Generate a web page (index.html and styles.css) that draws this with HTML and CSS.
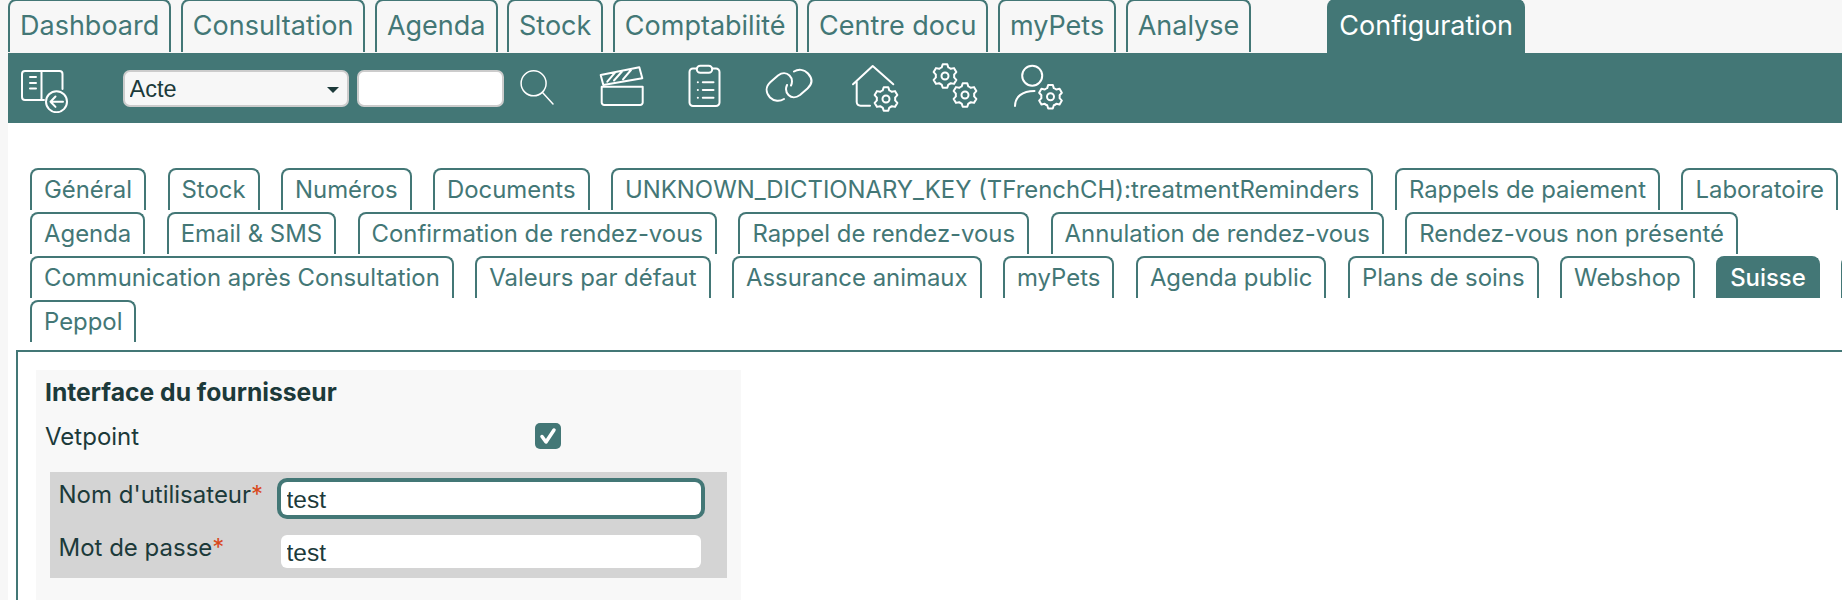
FILE: index.html
```html
<!DOCTYPE html>
<html lang="fr">
<head>
<meta charset="UTF-8">
<title>Configuration</title>
<link rel="stylesheet" href="styles.css">
</head>
<body>

<nav class="main-tabs">
    <a class="main-tab">Dashboard</a>
    <a class="main-tab">Consultation</a>
    <a class="main-tab">Agenda</a>
    <a class="main-tab">Stock</a>
    <a class="main-tab">Comptabilité</a>
    <a class="main-tab">Centre docu</a>
    <a class="main-tab">myPets</a>
    <a class="main-tab">Analyse</a>
    <a class="main-tab active">Configuration</a>
</nav>

<div class="toolbar">
    <svg class="icon" viewBox="0 0 50 50">
        <path d="M42.500 26V11a3 3 0 0 0-3-3H5a3 3 0 0 0-3 3v23a3 3 0 0 0 3 3h19M21.500 8v29M10 14h6M10 20h6M10 25.500h6"/>
        <circle cx="36.500" cy="38.700" r="10.500"/>
        <path d="M43 38.700H30.500M35.500 33.500l-5 5.200 5 5.200"/>
    </svg>
    <div class="select-wrap">
        <select class="search-type"><option>Acte</option></select>
    </div>
    <input class="search-box" type="text">
    <svg class="icon search-icon" viewBox="0 0 50 50">
        <circle cx="21.600" cy="20.300" r="12.500"/>
        <path d="M30.500 29.500L41 41"/>
    </svg>
    <svg class="icon clapper-icon" viewBox="0 0 50 50">
        <path d="M4.700 23.700H45.700V39.500a2.500 2.500 0 0 1-2.500 2.500H7.200a2.500 2.500 0 0 1-2.500-2.500Z"/>
        <path d="M3.700 12L42.300 4.300L45.300 15.300L6.300 22ZM10.300 18.700L18 9.700M17 17.500L25 8.500M26 16.300L34 7"/>
    </svg>
    <svg class="icon clipboard-icon" viewBox="0 0 50 50">
        <path d="M16.800 5.500H13a3.500 3.500 0 0 0-3.500 3.500V39.500a3.500 3.500 0 0 0 3.500 3.500H36a3.500 3.500 0 0 0 3.500-3.500V9a3.500 3.500 0 0 0-3.500-3.500H32.200"/>
        <rect x="16.800" y="2.700" width="15.400" height="7" rx="3.500"/>
        <path d="M17.800 19.300h.1M17.800 27h.1M17.800 34.700h.1M22.800 19.300H33.500M22.800 27H33.500M22.800 34.700H33.500"/>
    </svg>
    <svg class="icon link-icon" viewBox="0 0 50 50">
        <path d="M20 36C16 38.500 10 38.500 6 34.500C1.500 29.500 1.500 23.500 6.500 19L14 12.500C18 9.500 22.500 9.500 25.500 12.500C28 15 28.500 19 27 22.500"/>
        <path d="M30 8.500C34 6 40 6 44 10.500C48.500 15.500 48.500 21 43.500 25.500L36 32C32 35 27.500 35 24.500 32C22 29.500 21.500 25.500 23 22"/>
    </svg>
    <svg class="icon house-icon" viewBox="0 0 50 50">
        <defs>
            <g id="gear">
                <path d="M-3.300-8.590L-2.290-11.780H2.290L3.300-8.590A9.200 9.200 0 0 1 5.790-7.150L9.060-7.870L11.350-3.910L9.090-1.440A9.200 9.200 0 0 1 9.090 1.440L11.350 3.910L9.060 7.870L5.790 7.150A9.200 9.200 0 0 1 3.300 8.590L2.290 11.780H-2.290L-3.300 8.590A9.200 9.200 0 0 1-5.790 7.150L-9.060 7.870L-11.350 3.910L-9.090 1.440A9.200 9.200 0 0 1-9.090-1.440L-11.350-3.910L-9.060-7.870L-5.790-7.150A9.200 9.200 0 0 1-3.300-8.590Z"/>
                <circle r="3.500"/>
            </g>
        </defs>
        <path d="M2 21.300L21.700 3L42.300 21.300M5.700 19V39a4 4 0 0 0 4 3.700H19"/>
        <use href="#gear" x="35" y="36"/>
    </svg>
    <svg class="icon gears-icon" viewBox="0 0 50 50">
        <use href="#gear" x="15" y="13"/>
        <use href="#gear" x="35" y="32"/>
    </svg>
    <svg class="icon user-icon" viewBox="0 0 50 50">
        <circle cx="18.200" cy="12.700" r="10"/>
        <path d="M1 43C1 34 8 28 20.500 28"/>
        <use href="#gear" x="36.500" y="33.700"/>
    </svg>
</div>

<main class="content">
    <div class="sub-tabs">
        <div class="sub-row">
            <a class="sub-tab">Général</a>
            <a class="sub-tab">Stock</a>
            <a class="sub-tab">Numéros</a>
            <a class="sub-tab">Documents</a>
            <a class="sub-tab">UNKNOWN_DICTIONARY_KEY (TFrenchCH):treatmentReminders</a>
            <a class="sub-tab">Rappels de paiement</a>
            <a class="sub-tab">Laboratoire</a>
        </div>
        <div class="sub-row">
            <a class="sub-tab">Agenda</a>
            <a class="sub-tab">Email &amp; SMS</a>
            <a class="sub-tab">Confirmation de rendez-vous</a>
            <a class="sub-tab">Rappel de rendez-vous</a>
            <a class="sub-tab">Annulation de rendez-vous</a>
            <a class="sub-tab">Rendez-vous non présenté</a>
        </div>
        <div class="sub-row">
            <a class="sub-tab">Communication après Consultation</a>
            <a class="sub-tab">Valeurs par défaut</a>
            <a class="sub-tab">Assurance animaux</a>
            <a class="sub-tab">myPets</a>
            <a class="sub-tab">Agenda public</a>
            <a class="sub-tab">Plans de soins</a>
            <a class="sub-tab">Webshop</a>
            <a class="sub-tab active">Suisse</a>
            <a class="sub-tab"></a>
        </div>
        <div class="sub-row">
            <a class="sub-tab">Peppol</a>
        </div>
    </div>

    <section class="panel">
        <div class="settings">
            <h2 class="settings-title">Interface du fournisseur</h2>
            <div class="check-row">
                <span class="check-label">Vetpoint</span>
                <span class="checkbox">
                    <svg viewBox="0 0 26 26"><path d="M7 13.500L11 19L19 7"/></svg>
                </span>
            </div>
            <div class="credentials">
                <div class="field">
                    <label class="field-label">Nom d'utilisateur<span class="required">*</span></label>
                    <input class="field-input focused" type="text" value="test">
                </div>
                <div class="field">
                    <label class="field-label">Mot de passe<span class="required">*</span></label>
                    <input class="field-input" type="text" value="test">
                </div>
            </div>
        </div>
    </section>
</main>

</body>
</html>
```

FILE: styles.css
```css
* {
    box-sizing: border-box;
}

html, body {
    height: 600px;
    overflow: hidden;
}

body {
    margin: 0;
    background-color: #f7f7f7;
    color: #1c3a3a;
    font-family: Inter, "Noto Sans", sans-serif;
}

.main-tabs {
    display: flex;
    align-items: flex-end;
    gap: 9.500px;
    height: 53px;
    padding: 0 0 1px 8px;
    overflow: hidden;
}

.main-tab {
    height: 53px;
    padding: 0 10px;
    border: 2px solid #437776;
    border-bottom: none;
    border-radius: 8px 8px 0 0;
    color: #437776;
    font-size: 27px;
    line-height: 50px;
}

.main-tab.active {
    height: 54px;
    margin-bottom: -1px;
    margin-left: 66.500px;
    background-color: #437776;
    color: #fff;
}

.toolbar {
    display: flex;
    align-items: center;
    height: 70px;
    margin-left: 8px;
    padding-left: 12px;
    background-color: #437776;
}

.icon {
    width: 50px;
    height: 50px;
    flex: none;
    fill: none;
    stroke: #fff;
    stroke-width: 2;
    stroke-linecap: round;
    stroke-linejoin: round;
}

.select-wrap {
    position: relative;
    margin-left: 52.500px;
}

.select-wrap::after {
    content: "";
    position: absolute;
    top: 17px;
    right: 10px;
    border-top: 6px solid #1c3a3a;
    border-left: 6px solid transparent;
    border-right: 6px solid transparent;
    pointer-events: none;
}

.search-type, .search-box {
    display: block;
    height: 37px;
    border: 2px solid #ccc;
    border-radius: 7px;
    font-family: "Liberation Sans", Arial, sans-serif;
    font-size: 23.500px;
    color: #1c3a3a;
}

.search-type {
    width: 226px;
    padding: 2px 5px 0;
    appearance: none;
    background-color: #f7f7f7;
}

.search-box {
    width: 147px;
    margin-left: 8px;
    background-color: #fff;
}

.search-icon { margin-left: 8px; stroke-width: 1.500; }
.clapper-icon { margin-left: 35px; }
.clipboard-icon { margin-left: 33px; }
.link-icon { margin-left: 34px; }
.house-icon { margin-left: 37px; }
.gears-icon { margin-left: 29px; }
.user-icon { margin-left: 34px; }

.content {
    height: 477px;
    margin-left: 8px;
    padding-top: 45px;
    background-color: #fff;
    overflow: hidden;
}

.sub-tabs {
    display: flex;
    flex-direction: column;
    gap: 2px;
    padding-left: 22px;
}

.sub-row {
    display: flex;
    gap: 21.500px;
    height: 42px;
}

.sub-tab {
    flex: none;
    min-width: 20px;
    height: 42px;
    padding: 0 12px;
    border: 2px solid #437776;
    border-bottom: none;
    border-radius: 8px 8px 0 0;
    color: #437776;
    font-size: 23.900px;
    line-height: 40px;
    white-space: nowrap;
}

.sub-tab.active {
    background-color: #437776;
    color: #fff;
    font-weight: 500;
}

.panel {
    height: 300px;
    margin: 8px -20px 0 8px;
    padding: 18px 0 0 18px;
    border-top: 2px solid #437776;
    border-left: 2px solid #437776;
}

.settings {
    width: 705px;
    height: 240px;
    background-color: #f8f8f8;
}

.settings-title {
    margin: 0;
    padding-left: 9px;
    font-size: 24.700px;
    font-weight: 700;
    line-height: 45px;
}

.check-row {
    display: flex;
    align-items: center;
    height: 42px;
    padding-left: 9px;
    font-size: 24px;
}

.check-label {
    width: 490px;
}

.checkbox {
    display: block;
    width: 26px;
    height: 26px;
    border-radius: 5px;
    background-color: #437776;
}

.checkbox svg {
    display: block;
    fill: none;
    stroke: #fff;
    stroke-width: 3.500;
    stroke-linecap: round;
    stroke-linejoin: round;
}

.credentials {
    display: flex;
    flex-direction: column;
    gap: 20px;
    width: 677px;
    height: 106px;
    margin: 15px 0 0 14px;
    padding: 10px 0 10px 8.500px;
    background-color: #d4d4d4;
}

.field {
    display: flex;
    height: 33px;
}

.field-label {
    width: 222.500px;
    font-size: 24px;
    line-height: 26px;
}

.required {
    color: #d9481c;
}

.field-input {
    width: 420px;
    height: 33px;
    padding: 2px 5.500px 0;
    border: none;
    border-radius: 6px;
    background-color: #fff;
    color: #1c3a3a;
    font-family: "Liberation Sans", Arial, sans-serif;
    font-size: 24.500px;
}

.field-input.focused {
    box-shadow: 0 0 0 4px #437776;
}
```
